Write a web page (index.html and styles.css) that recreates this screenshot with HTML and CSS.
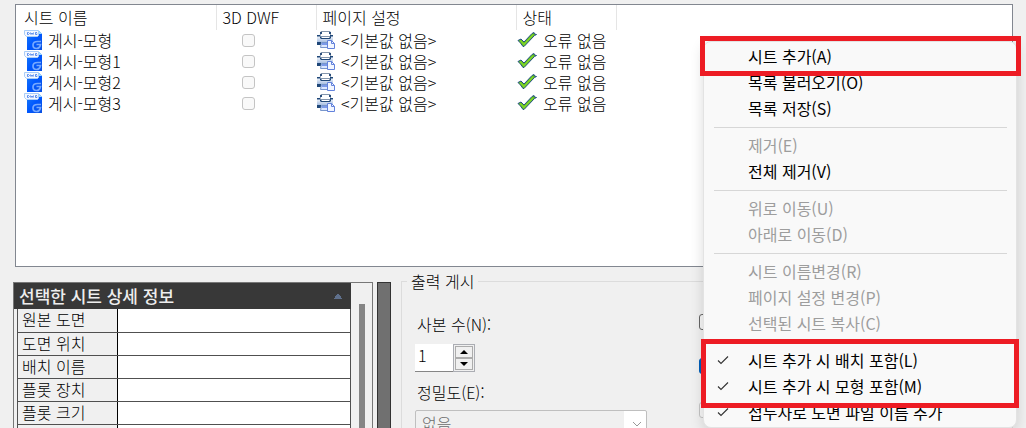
FILE: index.html
```html
<!DOCTYPE html>
<html lang="ko">
<head>
    <meta charset="UTF-8">
    <meta name="viewport" content="width=device-width, initial-scale=1.0">
    <title>게시</title>
    <link rel="stylesheet" href="styles.css">
</head>
<body>
    <svg class="defs" width="0" height="0" aria-hidden="true">
        <defs>
            <linearGradient id="blue" x1="0" y1="0" x2="1" y2="1">
                <stop offset="0" stop-color="#1a7cf5"/>
                <stop offset="0.5" stop-color="#0058ff"/>
                <stop offset="1" stop-color="#0a50e0"/>
            </linearGradient>
            <linearGradient id="metal" x1="0" y1="0" x2="0" y2="1">
                <stop offset="0" stop-color="#f4f8fd"/>
                <stop offset="1" stop-color="#8facd8"/>
            </linearGradient>
        </defs>
        <symbol id="dwg" viewBox="0 0 18 20">
            <path d="M3 1h12l3 3v16H3z" fill="url(#blue)"/>
            <path d="M15 1l3 3h-3z" fill="#9fe0ff"/>
            <path d="M0.500 0.500h14v5l-1 1H2.500l-2-2z" fill="#f4f8ff" stroke="#a9cdf8"/>
            <path d="M3.500 2.500v2h1l1-1-1-1zM6.500 2.500l.5 2 1-1.500 1 1.500.5-2M13 2.500h-1.500v2H13v-1" fill="none" stroke="#4a82ec" stroke-width="0.900"/>
            <path d="M17 11.500h-3.500c-3 0-4.500 1.500-4.500 3.500s1.500 3.500 3.500 3.500c2 0 3.500-1.500 4-4h-4" fill="none" stroke="#76a9ff" stroke-width="1.700"/>
        </symbol>
        <symbol id="printer" viewBox="0 0 18 18">
            <path d="M4 0.500h9l1 5H3z" fill="#fff" stroke="#8496ad"/>
            <path d="M3 1h2v2H3zM12 1h2v2h-2z" fill="#2c4f7c"/>
            <path d="M0 5h3l2 2h7l2-2h2v8H0z" fill="url(#metal)"/>
            <path d="M0 4h3v1.500H0zM13 4h3v1.500h-3zM3 5l2 2h7l2-2v2l-1 1H4L3 7z" fill="#1f4778"/>
            <path d="M0 11h4v3H0z" fill="#1f4778"/>
            <path d="M4.500 11.500h6v5h-7z" fill="#dce7ff" stroke="#7896cc"/>
            <path d="M5 12h5v2H5z" fill="#7b9ae8"/>
            <path d="M10.500 9.500h4l3 3v5h-7z" fill="#f2f6ff" stroke="#6382dc"/>
            <path d="M14.500 9.500v3h3" fill="none" stroke="#6382dc"/>
        </symbol>
        <symbol id="ok" viewBox="0 0 20 16">
            <path d="M1 8.500l3-1.500 3 3L15 1.500l2-1 .5 1.500 2 .5-2 1-10.500 11H6L3.500 11z" fill="#63c01b" stroke="#234f87"/>
            <path d="M3 8.500l4 4L16 3" fill="none" stroke="#7fd42c" stroke-width="1.500"/>
        </symbol>
        <symbol id="tick" viewBox="0 0 12 10">
            <path d="M1 5.500l3 3L11 1.500" fill="none" stroke="#333" stroke-width="1.100"/>
        </symbol>
    </svg>

    <main class="dialog">
        <section class="sheets">
            <table class="sheet-table">
                <thead>
                    <tr><th class="wide">시트 이름</th><th>3D DWF</th><th class="wide">페이지 설정</th><th>상태</th><th></th></tr>
                </thead>
                <tbody>
                    <tr>
                        <td><span class="cell"><svg class="dwg"><use href="#dwg"/></svg>게시-모형</span></td>
                        <td class="center"><input class="check" type="checkbox" aria-label="3D DWF" disabled></td>
                        <td><span class="cell"><svg class="printer"><use href="#printer"/></svg>&lt;기본값 없음&gt;</span></td>
                        <td><span class="cell"><svg class="ok"><use href="#ok"/></svg>오류 없음</span></td>
                        <td></td>
                    </tr>
                    <tr>
                        <td><span class="cell"><svg class="dwg"><use href="#dwg"/></svg>게시-모형1</span></td>
                        <td class="center"><input class="check" type="checkbox" aria-label="3D DWF" disabled></td>
                        <td><span class="cell"><svg class="printer"><use href="#printer"/></svg>&lt;기본값 없음&gt;</span></td>
                        <td><span class="cell"><svg class="ok"><use href="#ok"/></svg>오류 없음</span></td>
                        <td></td>
                    </tr>
                    <tr>
                        <td><span class="cell"><svg class="dwg"><use href="#dwg"/></svg>게시-모형2</span></td>
                        <td class="center"><input class="check" type="checkbox" aria-label="3D DWF" disabled></td>
                        <td><span class="cell"><svg class="printer"><use href="#printer"/></svg>&lt;기본값 없음&gt;</span></td>
                        <td><span class="cell"><svg class="ok"><use href="#ok"/></svg>오류 없음</span></td>
                        <td></td>
                    </tr>
                    <tr>
                        <td><span class="cell"><svg class="dwg"><use href="#dwg"/></svg>게시-모형3</span></td>
                        <td class="center"><input class="check" type="checkbox" aria-label="3D DWF" disabled></td>
                        <td><span class="cell"><svg class="printer"><use href="#printer"/></svg>&lt;기본값 없음&gt;</span></td>
                        <td><span class="cell"><svg class="ok"><use href="#ok"/></svg>오류 없음</span></td>
                        <td></td>
                    </tr>
                </tbody>
            </table>
        </section>

        <div class="lower">
            <section class="details">
                <div class="details-main">
                    <h2 class="details-title">선택한 시트 상세 정보
                        <svg class="collapse" viewBox="0 0 8 5"><path d="M0 5V4h1V2h1V1h1V0h2v1h1v1h1v2h1v1z" fill="#5f708c"/></svg>
                    </h2>
                    <table class="details-table">
                        <tr><th>원본 도면</th><td></td></tr>
                        <tr><th>도면 위치</th><td></td></tr>
                        <tr><th>배치 이름</th><td></td></tr>
                        <tr><th>플롯 장치</th><td></td></tr>
                        <tr><th>플롯 크기</th><td></td></tr>
                        <tr><th></th><td></td></tr>
                    </table>
                </div>
                <div class="track"><div class="thumb"></div></div>
            </section>
            <div class="splitter"></div>
            <fieldset class="output">
                <legend>출력 게시</legend>
                <div class="output-fields">
                    <label for="copies">사본 수(N):</label>
                    <div class="spinner">
                        <input id="copies" type="text" value="1">
                        <div class="spin-buttons">
                            <button type="button" aria-label="증가"><svg viewBox="0 0 8 4"><path d="M0 4l4-4 4 4z"/></svg></button>
                            <button type="button" aria-label="감소"><svg viewBox="0 0 8 4"><path d="M0 0h8L4 4z"/></svg></button>
                        </div>
                    </div>
                    <label for="precision">정밀도(E):</label>
                    <div class="select-box">
                        <select id="precision" disabled><option>없음</option></select>
                        <svg viewBox="0 0 10 6"><path d="M1 1l4 4 4-4" fill="none" stroke="#999"/></svg>
                    </div>
                </div>
                <div class="output-options">
                    <input class="option" type="checkbox" aria-label="옵션 1">
                    <input class="option" type="checkbox" aria-label="옵션 2" checked>
                    <input class="option" type="checkbox" aria-label="옵션 3" disabled>
                </div>
            </fieldset>
        </div>
    </main>

    <div class="menu">
        <button type="button">시트 추가(A)</button>
        <button type="button">목록 불러오기(O)</button>
        <button type="button">목록 저장(S)</button>
        <hr>
        <button type="button" disabled>제거(E)</button>
        <button type="button">전체 제거(V)</button>
        <hr>
        <button type="button" disabled>위로 이동(U)</button>
        <button type="button" disabled>아래로 이동(D)</button>
        <hr>
        <button type="button" disabled>시트 이름변경(R)</button>
        <button type="button" disabled>페이지 설정 변경(P)</button>
        <button type="button" disabled>선택된 시트 복사(C)</button>
        <hr>
        <button type="button" class="checked"><svg><use href="#tick"/></svg>시트 추가 시 배치 포함(L)</button>
        <button type="button" class="checked"><svg><use href="#tick"/></svg>시트 추가 시 모형 포함(M)</button>
        <button type="button" class="checked"><svg><use href="#tick"/></svg>접두사로 도면 파일 이름 추가</button>
        <div class="mark mark-add"></div>
        <div class="mark mark-include"></div>
    </div>
</body>
</html>
```
FILE: styles.css
```css
* {
    box-sizing: border-box;
}
body {
    margin: 0;
    height: 100vh;
    overflow: hidden;
    position: relative;
    background-color: #f0f0f0;
    color: #000;
    font-family: "Noto Sans CJK KR", sans-serif;
    font-size: 16px;
    font-weight: 300;
    line-height: 20px;
}
input,
select,
button {
    font: inherit;
    color: inherit;
    margin: 0;
}
.defs {
    position: absolute;
}
.dialog {
    height: 100%;
    display: flex;
    flex-direction: column;
    gap: 14px;
    padding: 4px 13px 0;
    overflow: hidden;
}

/* sheet list */
.sheets {
    flex: 0 0 263px;
    margin-left: 2px;
    background-color: #fff;
    border: 1px solid #828790;
}
.sheet-table {
    width: 100%;
    table-layout: fixed;
    border-collapse: collapse;
}
.sheet-table th {
    width: 100px;
    height: 25px;
    padding: 0 0 2px 6px;
    border-right: 1px solid #e5e5e5;
    font-weight: 300;
    text-align: left;
}
.sheet-table th.wide {
    width: 200px;
}
.sheet-table th:first-child {
    padding-left: 8px;
}
.sheet-table th:last-child {
    width: auto;
    border-right: 0;
}
.sheet-table td {
    height: 21px;
    padding: 0 0 0 1px;
}
.sheet-table td:first-child {
    padding-left: 8px;
}
.sheet-table td.center {
    padding-left: 26px;
}
.cell {
    display: flex;
    align-items: center;
    height: 21px;
    padding-bottom: 1px;
    gap: 6px;
    white-space: nowrap;
}
.cell svg {
    flex: none;
}
.dwg {
    width: 18px;
    height: 20px;
}
.printer {
    width: 18px;
    height: 18px;
}
.ok {
    width: 20px;
    height: 16px;
}
.check {
    display: block;
    appearance: none;
    width: 13px;
    height: 13px;
    border: 1px solid #c4c4c4;
    border-radius: 3px;
    background-color: #f9f9f9;
}

/* lower half */
.lower {
    flex: 1;
    display: flex;
    align-items: stretch;
    min-height: 0;
}
.details {
    flex: 0 0 360px;
    display: flex;
    margin-top: 1px;
    border: 1px solid #777;
    border-bottom: 0;
    overflow: hidden;
}
.details-main {
    flex: 1;
}
.details-title {
    display: flex;
    align-items: center;
    justify-content: space-between;
    height: 26px;
    margin: 0;
    padding: 0 9px 0 5px;
    background-color: #383838;
    color: #eee;
    font-size: 17px;
    font-weight: 500;
}
.collapse {
    width: 8px;
    height: 5px;
}
.details-table {
    width: calc(100% - 3px);
    margin-left: 3px;
    border-collapse: collapse;
    table-layout: fixed;
}
.details-table th,
.details-table td {
    height: 23px;
    padding: 0 4px 2px;
    border: 1px solid #505050;
    border-top: 0;
    line-height: 20px;
}
.details-table th {
    width: 100px;
    border-right-color: #000;
    font-weight: 300;
    text-align: left;
}
.details-table td {
    background-color: #fff;
}
.track {
    flex: 0 0 21px;
    padding: 21px 7px 0 8px;
}
.thumb {
    height: 100%;
    background-color: #858585;
}
.splitter {
    flex: 0 0 14px;
    margin: 1px 10px 0 4px;
    background-color: #707070;
    border: 1px solid #333;
    border-bottom: 0;
}
.output {
    flex: 1;
    display: flex;
    justify-content: space-between;
    min-width: 0;
    margin: -10px 0 0;
    padding: 23px 13px 0;
    border: 1px solid #dcdcdc;
    border-bottom: 0;
}
.output legend {
    margin-left: -8px;
    padding: 0 4px;
}
.output-fields {
    flex: 0 0 232px;
}
.output-fields label {
    display: block;
    padding-left: 2px;
}
.spinner {
    display: flex;
    width: 60px;
    height: 28px;
    margin: 10px 0;
}
.spinner input {
    flex: 1;
    min-width: 0;
    padding: 0 3px 6px;
    border: 0;
    border-bottom: 1px solid #868686;
    background-color: #fff;
}
.spin-buttons {
    flex: 0 0 22px;
    display: flex;
    flex-direction: column;
    padding: 1px;
    border: 1px solid #abadb3;
}
.spin-buttons button {
    flex: 1;
    display: flex;
    align-items: center;
    justify-content: center;
    padding: 0;
    border: 1px solid #acacac;
    background-color: #f0f0f0;
}
.spin-buttons svg {
    width: 8px;
    height: 4px;
}
.select-box {
    position: relative;
    margin-top: 8px;
}
.select-box select {
    appearance: none;
    width: 100%;
    height: 26px;
    padding: 0 6px;
    border: 1px solid #bfbfbf;
    border-radius: 2px;
    background: linear-gradient(to left, #fff 22px, #f0f0f0 22px);
    color: #6d6d6d;
    opacity: 1;
}
.select-box svg {
    position: absolute;
    top: 11px;
    right: 5px;
    width: 10px;
    height: 6px;
}
.output-options {
    flex: 0 0 300px;
    display: flex;
    flex-direction: column;
    gap: 28px;
}
.option {
    appearance: none;
    flex: none;
    width: 16px;
    height: 16px;
    border: 1px solid #666;
    border-radius: 3px;
    background-color: #f6f6f6;
}
.option:checked {
    border-color: #005fb8;
    background-color: #005fb8;
}
.option:disabled {
    border-color: #c4c4c4;
}

/* context menu */
.menu {
    position: absolute;
    top: 41px;
    right: 9px;
    width: 314px;
    padding: 2px 0 1px;
    border: 1px solid #e3e3e3;
    border-radius: 8px;
    background-color: #f9f9f9;
    box-shadow: 0 4px 14px rgba(0, 0, 0, 0.14);
    font-weight: 400;
}
.menu button {
    display: flex;
    align-items: center;
    width: 100%;
    height: 26px;
    padding: 0 0 2px 44px;
    border: 0;
    background: none;
    text-align: left;
}
.menu button:disabled {
    color: #9d9d9d;
}
.menu .checked {
    gap: 19px;
    padding-left: 13px;
}
.menu .checked svg {
    width: 12px;
    height: 10px;
}
.menu hr {
    height: 1px;
    margin: 5px 9px 5px 10px;
    border: 0;
    background-color: #d7d7d7;
}
.mark {
    position: absolute;
    border: 5px solid #ed1c24;
}
.mark-add {
    top: -6px;
    left: -4px;
    right: -5px;
    height: 40px;
}
.mark-include {
    bottom: 19px;
    left: -3px;
    right: -3px;
    height: 69px;
}
```
